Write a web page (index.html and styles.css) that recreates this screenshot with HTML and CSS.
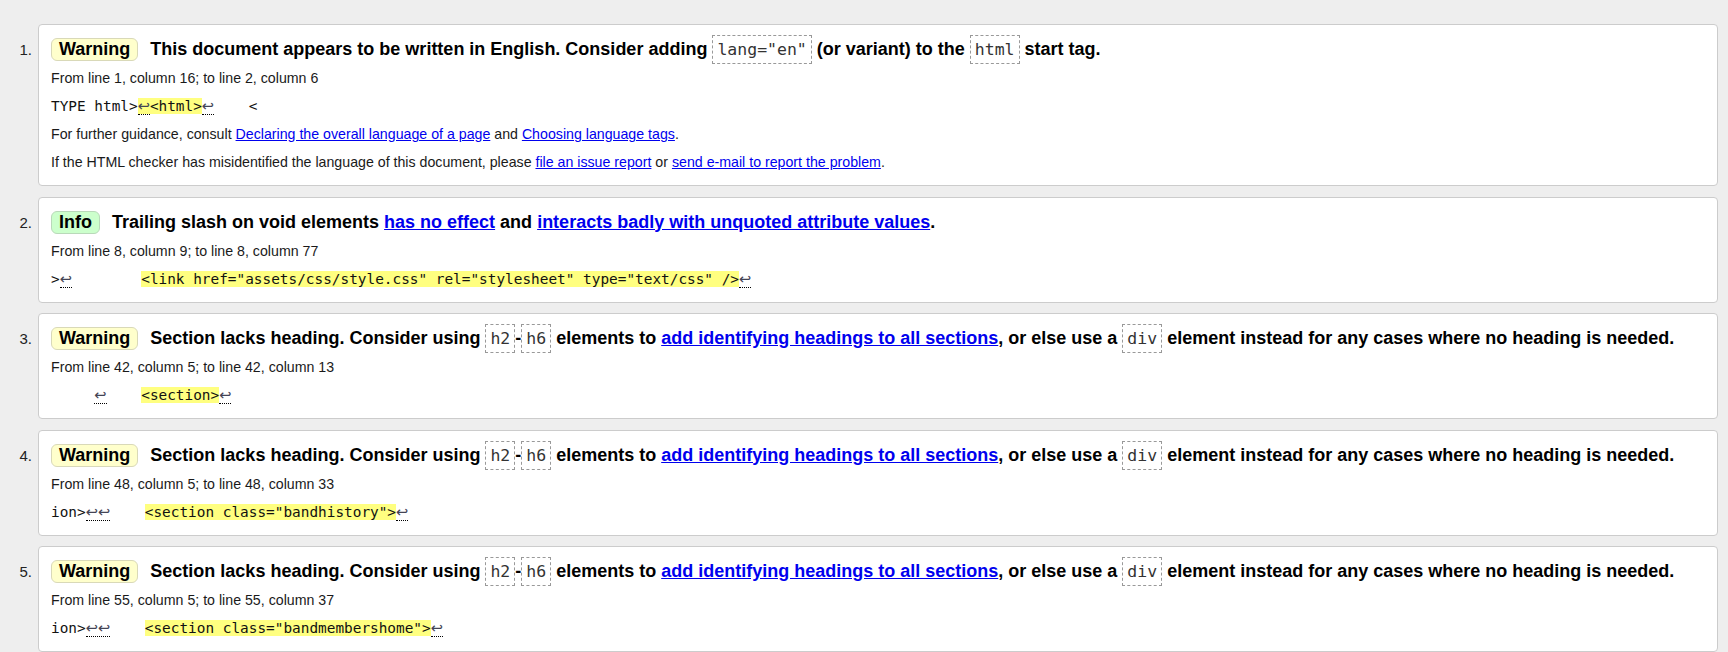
FILE: index.html
```html
<!DOCTYPE html>
<html lang="en">
<head>
<meta charset="utf-8">
<title>Nu Html Checker – messages</title>
<link rel="stylesheet" href="styles.css">
</head>
<body>
<ol class="messages">
  <li class="msg">
    <div class="card">
      <p class="head"><strong class="badge warning">Warning</strong><span>This document appears to be written in English. Consider adding <code class="ic">lang="en"</code> (or variant) to the <code class="ic">html</code> start tag.</span></p>
      <p class="line">From line 1, column 16; to line 2, column 6</p>
      <p class="line extract"><code>TYPE html&gt;<mark><span class="lf">↩</span>&lt;html&gt;</mark><span class="lf">↩</span>    &lt;</code></p>
      <p class="line">For further guidance, consult <a href="#">Declaring the overall language of a page</a> and <a href="#">Choosing language tags</a>.</p>
      <p class="line">If the HTML checker has misidentified the language of this document, please <a href="#">file an issue report</a> or <a href="#">send e-mail to report the problem</a>.</p>
    </div>
  </li>
  <li class="msg">
    <div class="card">
      <p class="head"><strong class="badge info">Info</strong><span>Trailing slash on void elements <a href="#">has no effect</a> and <a href="#">interacts badly with unquoted attribute values</a>.</span></p>
      <p class="line">From line 8, column 9; to line 8, column 77</p>
      <p class="line extract"><code>&gt;<span class="lf">↩</span>        <mark>&lt;link href="assets/css/style.css" rel="stylesheet" type="text/css" /&gt;</mark><span class="lf">↩</span></code></p>
    </div>
  </li>
  <li class="msg">
    <div class="card">
      <p class="head"><strong class="badge warning">Warning</strong><span>Section lacks heading. Consider using <code class="ic">h2</code>-<code class="ic">h6</code> elements to <a href="#">add identifying headings to all sections</a>, or else use a <code class="ic">div</code> element instead for any cases where no heading is needed.</span></p>
      <p class="line">From line 42, column 5; to line 42, column 13</p>
      <p class="line extract"><code>     <span class="lf">↩</span>    <mark>&lt;section&gt;</mark><span class="lf">↩</span></code></p>
    </div>
  </li>
  <li class="msg">
    <div class="card">
      <p class="head"><strong class="badge warning">Warning</strong><span>Section lacks heading. Consider using <code class="ic">h2</code>-<code class="ic">h6</code> elements to <a href="#">add identifying headings to all sections</a>, or else use a <code class="ic">div</code> element instead for any cases where no heading is needed.</span></p>
      <p class="line">From line 48, column 5; to line 48, column 33</p>
      <p class="line extract"><code>ion&gt;<span class="lf">↩↩</span>    <mark>&lt;section class="bandhistory"&gt;</mark><span class="lf">↩</span></code></p>
    </div>
  </li>
  <li class="msg">
    <div class="card">
      <p class="head"><strong class="badge warning">Warning</strong><span>Section lacks heading. Consider using <code class="ic">h2</code>-<code class="ic">h6</code> elements to <a href="#">add identifying headings to all sections</a>, or else use a <code class="ic">div</code> element instead for any cases where no heading is needed.</span></p>
      <p class="line">From line 55, column 5; to line 55, column 37</p>
      <p class="line extract"><code>ion&gt;<span class="lf">↩↩</span>    <mark>&lt;section class="bandmembershome"&gt;</mark><span class="lf">↩</span></code></p>
    </div>
  </li>
</ol>
</body>
</html>
```
FILE: styles.css
```css
html, body {
  margin: 0;
  padding: 0;
  background: #eeeeee;
}

body {
  font-family: "Liberation Sans", Arial, sans-serif;
  font-size: 14.2px;
  color: #222;
}

.messages {
  list-style: none;
  margin: 0;
  padding: 24px 10px 0 0;
  counter-reset: msg;
}

.msg {
  display: flex;
  align-items: baseline;
  margin: 0 0 10.5px 0;
  counter-increment: msg;
}

.msg::before {
  content: counter(msg) ".";
  flex: 0 0 38px;
  box-sizing: border-box;
  padding-right: 6px;
  text-align: right;
  font-size: 15px;
  color: #222;
}

.card {
  flex: 1 1 auto;
  min-width: 0;
  background: #fff;
  border: 1px solid #cccccc;
  border-radius: 4px;
  padding: 9px 12px 9px 12px;
}

.card p {
  margin: 0;
}

.head {
  font-size: 18px;
  height: 30px;
  line-height: 30px;
  font-weight: bold;
  color: #000;
}

.badge {
  display: inline-block;
  line-height: 21px;
  padding: 0 7px;
  margin-right: 12px;
  border: 1px solid #d6d6c0;
  border-radius: 6px;
  font-weight: bold;
  color: #000;
}

.badge.warning {
  background: #ffffcc;
  border-color: #d9d9b8;
}

.badge.info {
  background: #ccffcc;
  border-color: #b9d9b9;
}

.ic {
  font-family: "DejaVu Sans Mono", "Liberation Mono", monospace;
  font-size: 16.5px;
  line-height: 18px;
  font-weight: normal;
  color: #333;
  border: 1px dashed #999;
  padding: 4px 4px;
}

.line {
  height: 28px;
  line-height: 28px;
  font-size: 14.2px;
  color: #1a1a1a;
}

.extract code {
  font-family: "DejaVu Sans Mono", "Liberation Mono", monospace;
  font-size: 14.4px;
  line-height: 16px;
  white-space: pre;
  color: #111;
}

.extract mark {
  background: #ffff80;
  color: inherit;
}

.lf {
  font-family: "DejaVu Sans", sans-serif;
  font-size: 14.6px;
  line-height: 16px;
  color: #445;
  border-bottom: 1px dotted #000;
}

a {
  color: #0000ee;
  text-decoration: underline;
}
```
